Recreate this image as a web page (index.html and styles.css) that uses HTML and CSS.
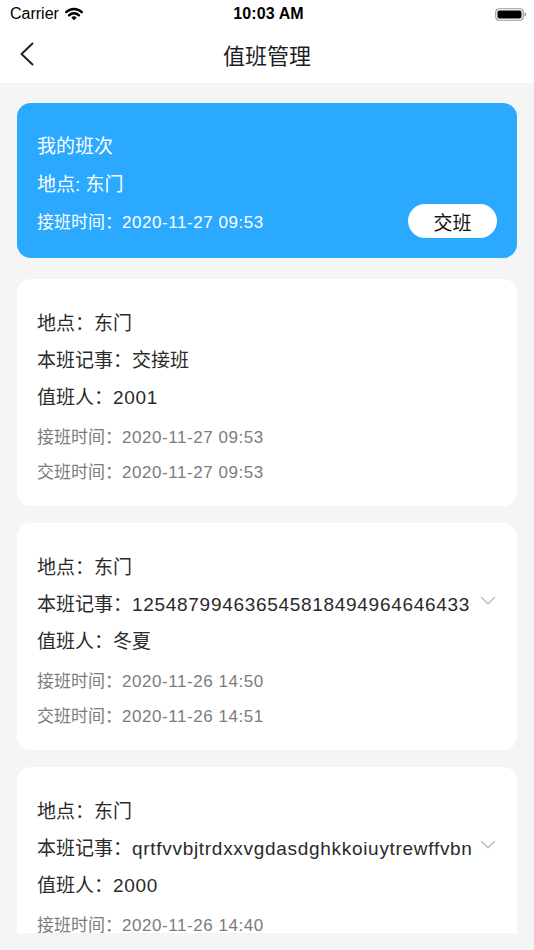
FILE: index.html
```html
<!DOCTYPE html>
<html lang="zh-CN">
<head>
<meta charset="utf-8">
<title>值班管理</title>
<link rel="stylesheet" href="styles.css">
</head>
<body>
<div class="screen">
  <header class="header">
    <div class="status">
      <div class="status-left">
        <span class="carrier">Carrier</span>
        <svg class="wifi" width="20" height="14" viewBox="0 0 20 14">
          <path d="M2.2 5.2 A11 11 0 0 1 17.8 5.2" fill="none" stroke="#000" stroke-width="2.4" stroke-linecap="round"/>
          <path d="M5.05 8.35 A7 7 0 0 1 14.95 8.35" fill="none" stroke="#000" stroke-width="2.4" stroke-linecap="round"/>
          <path d="M10 13.2 L7.3 10.5 A3.8 3.8 0 0 1 12.7 10.5 Z" fill="#000"/>
        </svg>
      </div>
      <div class="time">10:03 AM</div>
      <div class="status-right">
        <svg class="battery" width="32" height="13" viewBox="0 0 32 13">
          <rect x="0.75" y="0.75" width="27.5" height="11.5" rx="3.5" fill="none" stroke="#9a9a9a" stroke-width="1.2"/>
          <rect x="2.5" y="2.5" width="24" height="8" rx="1.8" fill="#000"/>
          <path d="M29.5 4.5 Q31.2 4.7 31.2 6.5 Q31.2 8.3 29.5 8.5 Z" fill="#9a9a9a"/>
        </svg>
      </div>
    </div>
    <nav class="nav">
      <div class="nav-left">
        <svg class="back" width="16" height="24" viewBox="0 0 16 24">
          <polyline points="13.5,1.5 2.5,12 13.5,22.5" fill="none" stroke="#1e1e1e" stroke-width="1.9" stroke-linecap="round" stroke-linejoin="round"/>
        </svg>
      </div>
      <h1 class="title">值班管理</h1>
      <div class="nav-right"></div>
    </nav>
  </header>

  <main class="content">
    <section class="mine">
      <div class="mine-row">我的班次</div>
      <div class="mine-row">地点: 东门</div>
      <div class="mine-row mine-last">
        <span class="mine-time">接班时间：<span class="lat-s">2020-11-27 09:53</span></span>
        <button class="handover">交班</button>
      </div>
    </section>

    <div class="list">
      <article class="card">
        <div class="row">地点：东门</div>
        <div class="row">本班记事：交接班</div>
        <div class="row">值班人：<span class="lat">2001</span></div>
        <div class="row-sub">接班时间：<span class="lat-s">2020-11-27 09:53</span></div>
        <div class="row-sub">交班时间：<span class="lat-s">2020-11-27 09:53</span></div>
      </article>

      <article class="card">
        <div class="row">地点：东门</div>
        <div class="row row-note">
          <span class="note-text">本班记事：<span class="lat">125487994636545818494964646433</span></span>
          <svg class="chev" width="16" height="9" viewBox="0 0 16 9"><polyline points="1,1 8,7.8 15,1" fill="none" stroke="#b9b9b9" stroke-width="1.2"/></svg>
        </div>
        <div class="row">值班人：冬夏</div>
        <div class="row-sub">接班时间：<span class="lat-s">2020-11-26 14:50</span></div>
        <div class="row-sub">交班时间：<span class="lat-s">2020-11-26 14:51</span></div>
      </article>

      <article class="card">
        <div class="row">地点：东门</div>
        <div class="row row-note">
          <span class="note-text">本班记事：<span class="lat">qrtfvvbjtrdxxvgdasdghkkoiuytrewffvbn</span></span>
          <svg class="chev" width="16" height="9" viewBox="0 0 16 9"><polyline points="1,1 8,7.8 15,1" fill="none" stroke="#b9b9b9" stroke-width="1.2"/></svg>
        </div>
        <div class="row">值班人：<span class="lat">2000</span></div>
        <div class="row-sub">接班时间：<span class="lat-s">2020-11-26 14:40</span></div>
        <div class="row-sub">交班时间：<span class="lat-s">2020-11-26 14:41</span></div>
      </article>
    </div>
  </main>
</div>
</body>
</html>
```

FILE: styles.css
```css
* {
  box-sizing: border-box;
}

html, body {
  margin: 0;
  padding: 0;
  background: #f5f5f5;
}

body {
  font-family: "Liberation Sans", "Noto Sans CJK SC", sans-serif;
  color: #2a2a2a;
}

.screen {
  width: 534px;
  height: 950px;
  overflow: hidden;
  background: #f5f5f5;
}

/* header */
.header {
  background: #ffffff;
  height: 83px;
  padding-bottom: 3px;
}

.status {
  height: 28px;
  display: grid;
  grid-template-columns: 1fr auto 1fr;
  align-items: center;
  padding: 0 7px 0 10px;
}

.status-left {
  display: flex;
  align-items: center;
  gap: 5px;
}

.carrier {
  font-size: 16px;
  color: #000;
}

.wifi {
  display: block;
  margin-top: -1px;
}

.time {
  font-size: 16px;
  font-weight: 700;
  color: #000;
  letter-spacing: 0.1px;
}

.status-right {
  display: flex;
  justify-content: flex-end;
}

.battery {
  display: block;
}

.nav {
  height: 52px;
  display: grid;
  grid-template-columns: 1fr auto 1fr;
  align-items: center;
}

.nav-left {
  padding-left: 19px;
  display: flex;
  align-items: center;
}

.back {
  display: block;
}

.title {
  margin: 0;
  font-size: 22px;
  font-weight: 400;
  color: #1e1e1e;
  font-family: "Noto Sans CJK SC", sans-serif;
}

/* content */
.content {
  height: 850px;
  overflow: hidden;
  padding: 20px 17px 0;
}

.mine {
  background: #2ba9ff;
  border-radius: 14px;
  padding: 25px 20px 16px 20px;
  color: #ffffff;
  margin-bottom: 21px;
}

.mine-row {
  font-size: 19px;
  line-height: 38px;
  height: 38px;
}

.mine-last {
  display: flex;
  align-items: center;
  justify-content: space-between;
  font-size: 17px;
}

.mine-time {
  line-height: 38px;
}

.handover {
  width: 89px;
  height: 34px;
  border: none;
  border-radius: 17px;
  background: #ffffff;
  color: #111111;
  font-family: "Noto Sans CJK SC", sans-serif;
  font-size: 19px;
  padding: 0;
  margin-bottom: 4px;
}

.list {
  display: flex;
  flex-direction: column;
  gap: 17px;
}

.card {
  background: #ffffff;
  border-radius: 14px;
  padding: 26px 21px 16px 20px;
}

.row {
  font-size: 19px;
  line-height: 37px;
  height: 37px;
  color: #2a2a2a;
  white-space: nowrap;
}

.row-note {
  display: flex;
  align-items: flex-start;
}

.note-text {
  flex: 1;
  min-width: 0;
  overflow: hidden;
}

.chev {
  flex: none;
  display: block;
  margin-top: 10px;
  margin-left: 8px;
}

.row + .row-sub {
  margin-top: 4px;
}

.row-sub {
  font-size: 17px;
  line-height: 35px;
  height: 35px;
  color: #7c7c7c;
  white-space: nowrap;
}

.lat {
  letter-spacing: 0.7px;
}

.lat-s {
  letter-spacing: 0.55px;
}
```
